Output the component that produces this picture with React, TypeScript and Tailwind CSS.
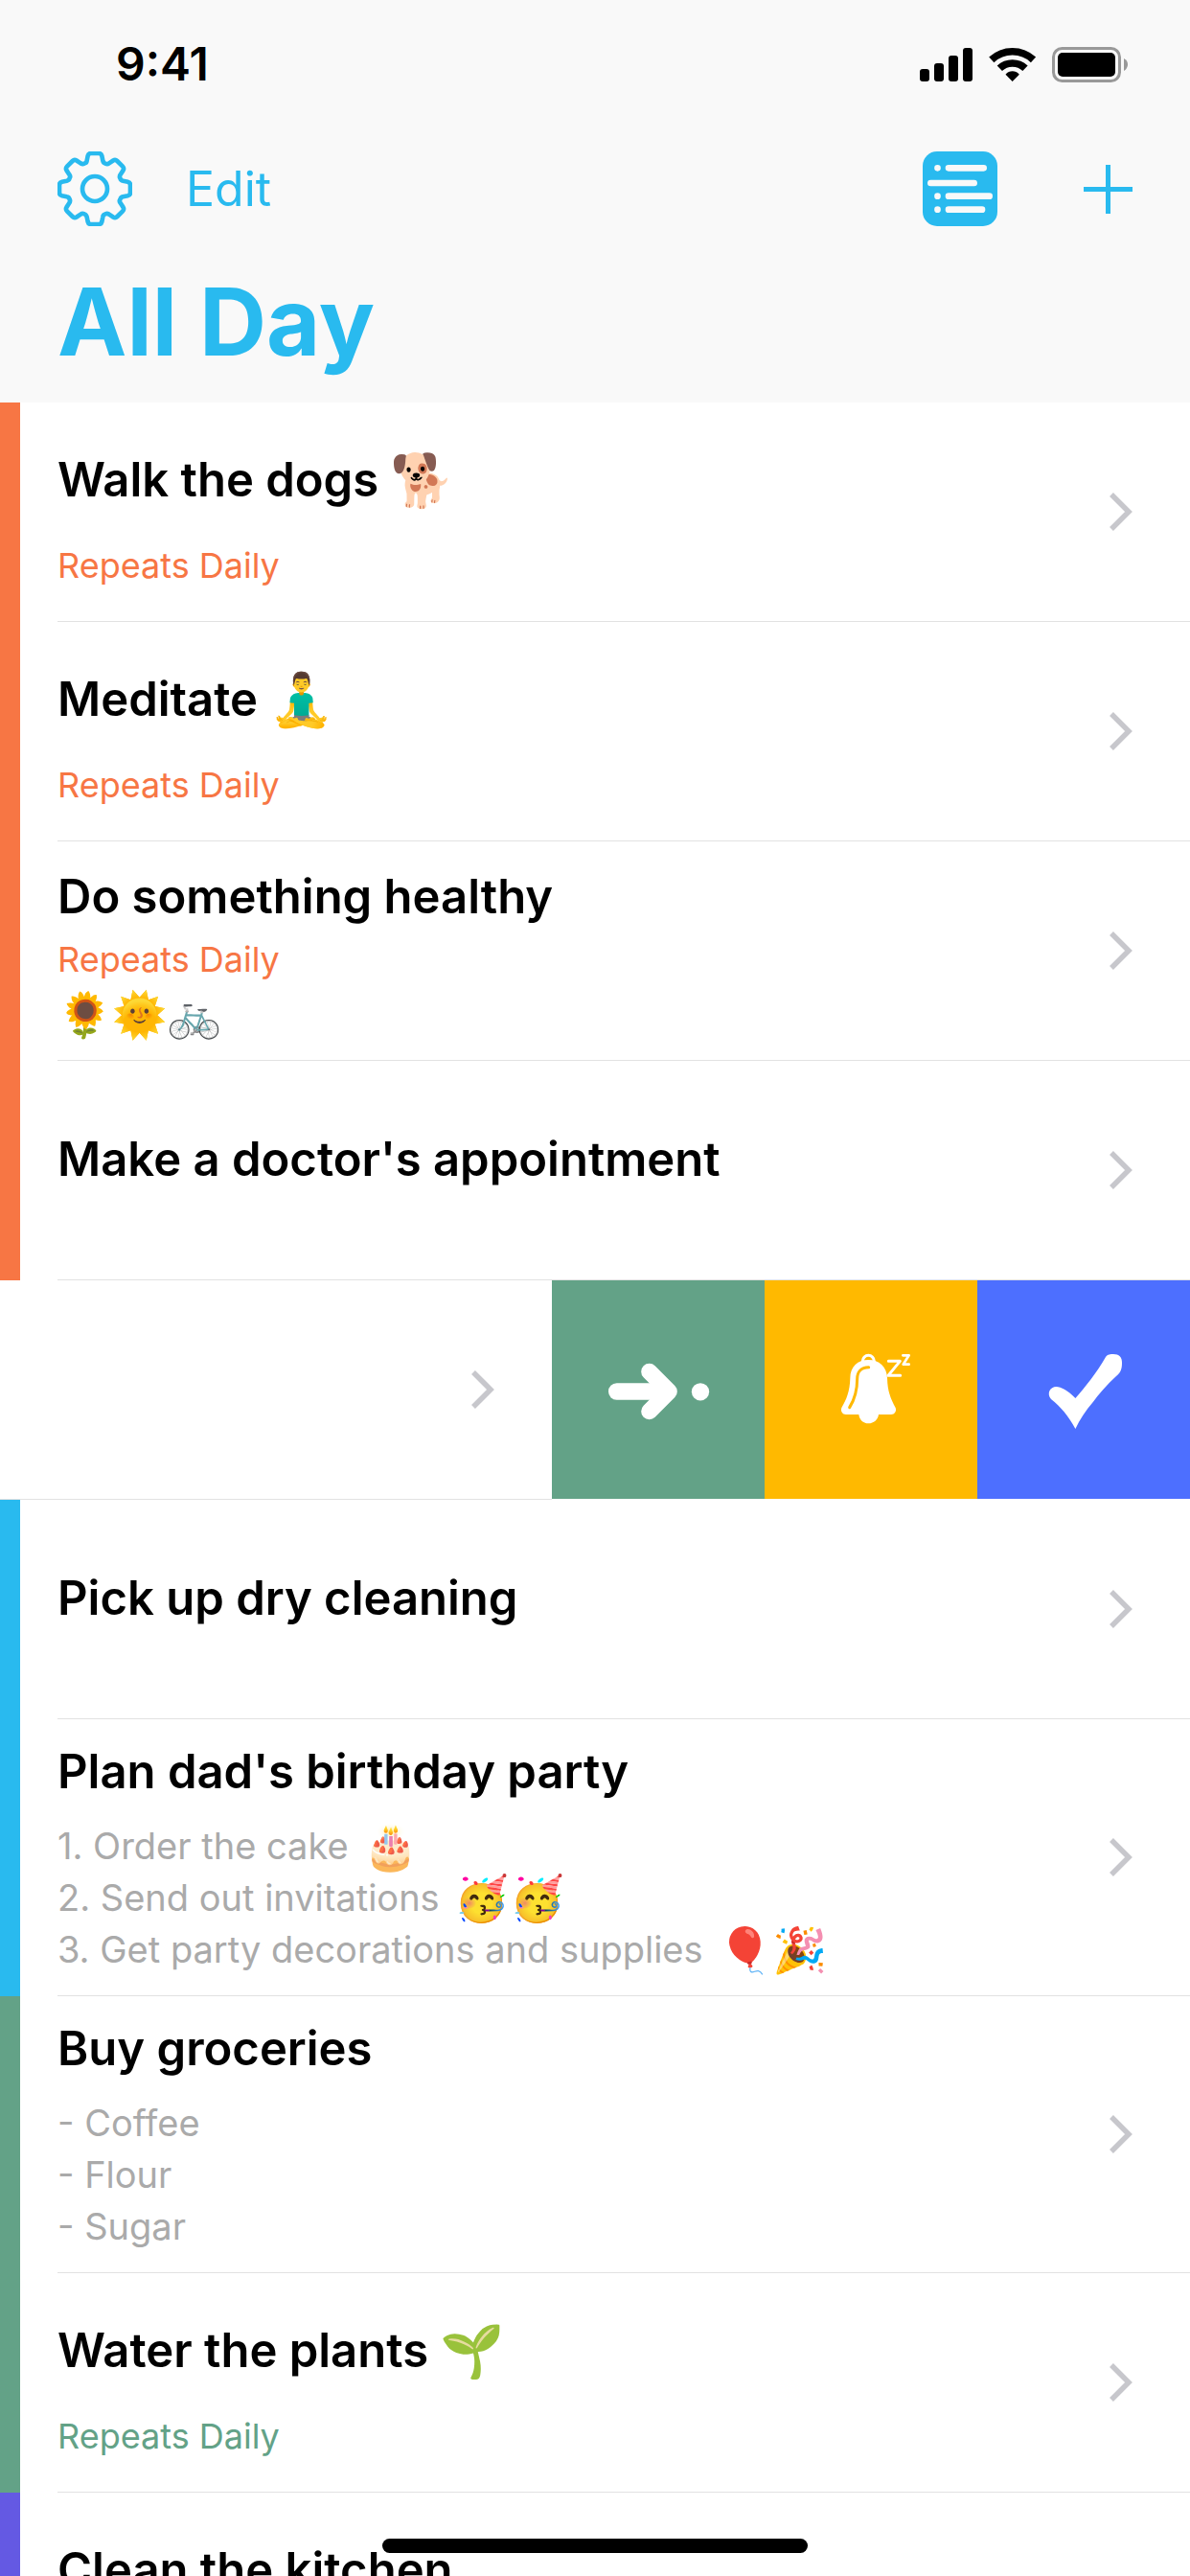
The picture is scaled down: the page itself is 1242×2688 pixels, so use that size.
import type { ReactNode } from "react";

type Tone = "orange" | "blue" | "green" | "indigo";

const BAR: Record<Tone, string> = {
  orange: "bg-[#f77644]",
  blue: "bg-[#29baef]",
  green: "bg-[#63a287]",
  indigo: "bg-[#6459e3]",
};

const LABEL: Record<Tone, string> = {
  orange: "text-[#f77644]",
  blue: "text-[#29baef]",
  green: "text-[#63a287]",
  indigo: "text-[#6459e3]",
};

/* Outline of an eight-toothed gear centred on (117, 117). */
function gearPath(): string {
  const tooth: Array<[string, number[][]]> = [
    ["Q", [[-26, -81], [-25, -88]]],
    ["L", [[-22, -103]]],
    ["Q", [[-20, -111], [-12, -111]]],
    ["L", [[12, -111]]],
    ["Q", [[20, -111], [22, -103]]],
    ["L", [[25, -88]]],
    ["Q", [[27, -81], [31, -80]]],
    ["L", [[42, -75]]],
  ];
  const turn = ([x, y]: number[], k: number) => {
    const a = (k * Math.PI) / 4;
    const px = 117 + x * Math.cos(a) - y * Math.sin(a);
    const py = 117 + x * Math.sin(a) + y * Math.cos(a);
    return `${px.toFixed(1)} ${py.toFixed(1)}`;
  };
  let d = `M${turn([-31, -80], 0)}`;
  for (let k = 0; k < 8; k++) {
    for (const [cmd, pts] of tooth.slice(0, 7)) {
      d += cmd + pts.map((p) => turn(p, k)).join(" ");
    }
    d += `L${turn([-31, -80], k + 1)}`;
  }
  return d + "Z";
}

function GearIcon() {
  return (
    <svg viewBox="0 0 234 234" className="size-[78px]" fill="none" stroke="currentColor" strokeWidth="14" strokeLinejoin="round" aria-hidden="true">
      <path d={gearPath()} />
      <circle cx="117" cy="117" r="39" />
    </svg>
  );
}

function ListIcon() {
  return (
    <svg viewBox="0 0 234 234" className="size-[78px]" aria-hidden="true">
      <rect width="234" height="234" rx="45" fill="currentColor" />
      <g stroke="#f9f9f9" strokeWidth="20" strokeLinecap="round">
        <path d="M81 52H191M25 99H161M81 140H209M81 182H186" />
        <path d="M46.500 52h.01M46.500 140h.01M46.500 182h.01" />
      </g>
    </svg>
  );
}

function PlusIcon() {
  return (
    <svg viewBox="0 0 51 51" className="size-[51px]" stroke="currentColor" strokeWidth="5" aria-hidden="true">
      <path d="M25.500 0V51M0 25.500H51" />
    </svg>
  );
}

function StatusIcons() {
  return (
    <svg viewBox="180 144 651 117" className="h-[39px] w-[217px]" role="img" aria-label="Signal, Wi-Fi, battery">
      <rect x="180" y="216" width="30" height="39" rx="9" />
      <rect x="225" y="198" width="30" height="57" rx="9" />
      <rect x="270" y="174" width="30" height="81" rx="9" />
      <rect x="315" y="150" width="30" height="105" rx="9" />
      <g fill="none" stroke="black" strokeWidth="23">
        <path d="M404.500 187A96 96 0 0 1 535.500 187" />
        <path d="M430 214A58 58 0 0 1 510 214" />
      </g>
      <path d="M470 255L448.500 233Q458 223 470 223T491.500 233Z" />
      <rect x="598.500" y="151.500" width="207" height="102" rx="27" fill="none" stroke="#999999" strokeWidth="9" />
      <rect x="612" y="165" width="180" height="75" rx="15" />
      <path d="M819 183Q831 189 831 202T819 222Z" fill="#999999" />
    </svg>
  );
}

function Chevron() {
  return (
    <svg viewBox="0 0 24 40" className="h-10 w-6 shrink-0" fill="none" stroke="#c7c7cc" strokeWidth="5.500" aria-hidden="true">
      <path d="M2 2L20 20L2 38" />
    </svg>
  );
}

function MoveIcon() {
  return (
    <svg viewBox="39 84 324 192" className="h-16 w-[108px]" fill="none" stroke="white" strokeLinecap="round" strokeLinejoin="round" aria-hidden="true">
      <path d="M71 186H225" strokeWidth="52" />
      <path d="M173 124L235 186L173 248" strokeWidth="51" />
      <circle cx="333" cy="187" r="27.500" fill="white" stroke="none" />
    </svg>
  );
}

function SnoozeIcon() {
  return (
    <svg viewBox="741 54 252 252" className="size-[84px]" fill="none" strokeLinecap="round" strokeLinejoin="round" aria-hidden="true">
      <circle cx="859" cy="91" r="18" stroke="white" strokeWidth="9" />
      <path d="M859 87C826 87 802 108 802 144C801 186 790 212 775 237C771 248 778 258 789 258H829C831 274 842 286 859 286S889 274 891 258H930C941 258 948 248 944 237C929 208 919 186 918 144C917 108 892 87 859 87Z" fill="white" />
      <path d="M860 110C835 110 824 126 824 146C824 190 810 220 800 236" stroke="#ffb900" strokeWidth="9" />
      <path d="M922 91H958L921 136H959" stroke="white" strokeWidth="9" />
      <path d="M967 73H986L968 101H986" stroke="white" strokeWidth="8" />
    </svg>
  );
}

function DoneIcon() {
  return (
    <svg viewBox="0 0 84 84" className="size-[84px]" fill="white" aria-hidden="true">
      <path d="M33.400 83C26 69 18 60 8 52C3 46 7 39 13.500 39C18 39 26 43 33.400 51C43 40 56 24 65 8C67 5 70 5 73 5C79 5 82 8 82 14C82 20 81 24 76 28C66 37 57 48 51.800 55C44 64 38 73 33.400 83Z" />
    </svg>
  );
}

function Title({ children, emoji }: { children: ReactNode; emoji?: string }) {
  return (
    <h2 className="flex h-[60px] items-center gap-3 text-[49px] leading-[60px] font-semibold whitespace-nowrap text-black">
      {children}
      {emoji && <span className="text-[54px]">{emoji}</span>}
    </h2>
  );
}

function Repeats({ tone }: { tone: Tone }) {
  return <p className={`h-11 text-[36px] leading-[44px] ${LABEL[tone]}`}>Repeats Daily</p>;
}

function Notes({ children }: { children: ReactNode }) {
  return <div className="text-[38px] leading-[54px] text-[#aaaaaa]">{children}</div>;
}

function Note({ children, emoji }: { children?: ReactNode; emoji?: string }) {
  return (
    <p className="flex h-[54px] items-center gap-4 whitespace-nowrap">
      {children}
      {emoji && <span className="text-[46px]">{emoji}</span>}
    </p>
  );
}

function Row({ tone, pad, children }: { tone: Tone; pad: string; children: ReactNode }) {
  return (
    <li className="flex shrink-0 gap-[39px] bg-white">
      <span className={`w-[21px] shrink-0 ${BAR[tone]}`} />
      <a href="#task" className="flex min-h-[229px] min-w-0 flex-1 items-center justify-between border-b border-[#e2e2e2] pr-[60px]">
        <div className={`flex flex-col self-stretch ${pad}`}>{children}</div>
        <Chevron />
      </a>
    </li>
  );
}

function SwipedRow() {
  return (
    <li className="flex min-h-[229px] shrink-0 bg-white">
      <a href="#task" aria-label="Open task" className="flex flex-1 items-center justify-end border-b border-[#e2e2e2] pr-[60px]">
        <Chevron />
      </a>
      <div className="flex pb-px">
        <button type="button" aria-label="Move to tomorrow" className="flex w-[222px] items-center justify-center bg-[#63a287]">
          <MoveIcon />
        </button>
        <button type="button" aria-label="Snooze" className="flex w-[222px] items-center justify-center bg-[#ffb900]">
          <SnoozeIcon />
        </button>
        <button type="button" aria-label="Complete" className="flex w-[222px] items-center justify-center bg-[#4d6fff]">
          <DoneIcon />
        </button>
      </div>
    </li>
  );
}

export default function App() {
  return (
    <div className="relative flex h-screen flex-col overflow-hidden bg-white font-['Inter','Noto_Color_Emoji',sans-serif]">
      <header className="shrink-0 bg-[#f9f9f9] text-[#29baef]">
        <div className="flex h-[134px] items-center justify-between pr-[65px] pl-[121px] text-black">
          <span className="text-[48px] leading-[60px] font-semibold">9:41</span>
          <StatusIcons />
        </div>
        <nav className="flex h-[126px] items-center justify-between px-[60px]">
          <div className="flex items-center gap-14">
            <button type="button" aria-label="Settings">
              <GearIcon />
            </button>
            <button type="button" className="text-[50px] leading-[60px]">Edit</button>
          </div>
          <div className="flex items-center gap-[90px]">
            <button type="button" aria-label="List view">
              <ListIcon />
            </button>
            <button type="button" aria-label="Add task">
              <PlusIcon />
            </button>
          </div>
        </nav>
        <h1 className="px-[60px] pt-4 pb-6 text-[97px] leading-[120px] font-bold">All Day</h1>
      </header>

      <ul className="flex min-h-0 flex-1 flex-col overflow-hidden">
        <Row tone="orange" pad="gap-[37px] pt-[51px]">
          <Title emoji="🐕">Walk the dogs</Title>
          <Repeats tone="orange" />
        </Row>
        <Row tone="orange" pad="gap-[37px] pt-[51px]">
          <Title emoji="🧘‍♂️">Meditate</Title>
          <Repeats tone="orange" />
        </Row>
        <Row tone="orange" pad="gap-[13px] pt-7">
          <Title>Do something healthy</Title>
          <div className="flex flex-col gap-2">
            <Repeats tone="orange" />
            <Notes>
              <Note emoji="🌻🌞🚲" />
            </Notes>
          </div>
        </Row>
        <Row tone="orange" pad="pt-[73px]">
          <Title>Make a doctor's appointment</Title>
        </Row>
        <SwipedRow />
        <Row tone="blue" pad="pt-[73px]">
          <Title>Pick up dry cleaning</Title>
        </Row>
        <Row tone="blue" pad="gap-5 pt-[25px] pb-[21px]">
          <Title>Plan dad's birthday party</Title>
          <Notes>
            <Note emoji="🎂">1. Order the cake</Note>
            <Note emoji="🥳🥳">2. Send out invitations</Note>
            <Note emoji="🎈🎉">3. Get party decorations and supplies</Note>
          </Notes>
        </Row>
        <Row tone="green" pad="gap-5 pt-[25px] pb-[21px]">
          <Title>Buy groceries</Title>
          <Notes>
            <Note>- Coffee</Note>
            <Note>- Flour</Note>
            <Note>- Sugar</Note>
          </Notes>
        </Row>
        <Row tone="green" pad="gap-[37px] pt-[51px]">
          <Title emoji="🌱">Water the plants</Title>
          <Repeats tone="green" />
        </Row>
        <Row tone="indigo" pad="pt-[51px]">
          <Title>Clean the kitchen</Title>
        </Row>
      </ul>

      <div className="absolute inset-x-0 bottom-6 flex justify-center">
        <div className="h-[15px] w-[444px] rounded-full bg-black" />
      </div>
    </div>
  );
}
